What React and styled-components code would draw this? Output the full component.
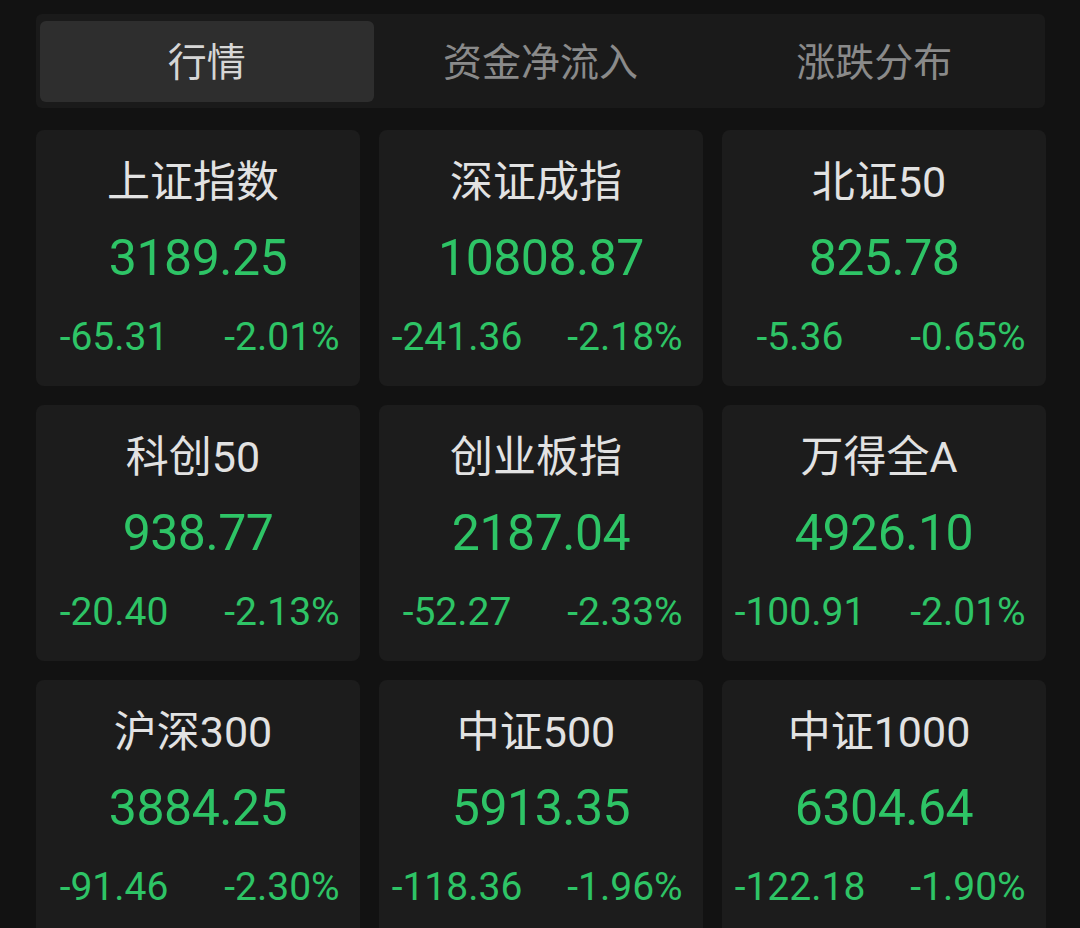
import React from "react";
import styled, { createGlobalStyle } from "styled-components";

const GlobalStyle = createGlobalStyle`
  html, body {
    margin: 0;
    padding: 0;
    background: #121212;
    overflow: hidden;
  }
  body {
    font-family: Roboto, "Noto Sans CJK SC", sans-serif;
  }
`;

const tabs = ["行情", "资金净流入", "涨跌分布"];

const indices = [
  { name: "上证指数", price: "3189.25", change: "-65.31", pct: "-2.01%" },
  { name: "深证成指", price: "10808.87", change: "-241.36", pct: "-2.18%" },
  { name: "北证50", price: "825.78", change: "-5.36", pct: "-0.65%" },
  { name: "科创50", price: "938.77", change: "-20.40", pct: "-2.13%" },
  { name: "创业板指", price: "2187.04", change: "-52.27", pct: "-2.33%" },
  { name: "万得全A", price: "4926.10", change: "-100.91", pct: "-2.01%" },
  { name: "沪深300", price: "3884.25", change: "-91.46", pct: "-2.30%" },
  { name: "中证500", price: "5913.35", change: "-118.36", pct: "-1.96%" },
  { name: "中证1000", price: "6304.64", change: "-122.18", pct: "-1.90%" },
];

const App = () => {
  const [active, setActive] = React.useState(0);

  return (
    <Page>
      <GlobalStyle />
      <TabBar>
        {tabs.map((t, i) => (
          <Tab key={t} $active={i === active} onClick={() => setActive(i)}>
            {t}
          </Tab>
        ))}
      </TabBar>
      <Grid>
        {indices.map((item) => (
          <Card key={item.name}>
            <Name>{item.name}</Name>
            <Price>{item.price}</Price>
            <Changes>
              <Change>{item.change}</Change>
              <Change>{item.pct}</Change>
            </Changes>
          </Card>
        ))}
      </Grid>
    </Page>
  );
};

const Page = styled.div`
  width: 1080px;
  height: 928px;
  box-sizing: border-box;
  padding: 14px 36px 0;
  display: flex;
  flex-direction: column;
  gap: 22px;
  overflow: hidden;
`;

const TabBar = styled.div`
  flex-shrink: 0;
  display: grid;
  grid-template-columns: repeat(3, 1fr);
  width: 1009px;
  height: 94px;
  box-sizing: border-box;
  padding: 7px 4px 6px;
  background: #1a1a1a;
  border-radius: 6px;
`;

const Tab = styled.div`
  display: flex;
  align-items: center;
  justify-content: center;
  padding-bottom: 6px;
  border-radius: 6px;
  font-family: "Noto Sans CJK SC", sans-serif;
  font-size: 39px;
  color: ${(p) => (p.$active ? "#d6d6d6" : "#8a8a8a")};
  background: ${(p) => (p.$active ? "#2e2e2e" : "transparent")};
  cursor: pointer;
`;

const Grid = styled.div`
  flex-shrink: 0;
  display: grid;
  grid-template-columns: repeat(3, 324px);
  grid-auto-rows: 256px;
  column-gap: 19px;
  row-gap: 19px;
`;

const Card = styled.div`
  background: #1c1c1c;
  border-radius: 8px;
  display: flex;
  flex-direction: column;
  align-items: center;
  padding-top: 26px;
  box-sizing: border-box;
`;

const Name = styled.div`
  margin-right: 10px;
  font-size: 43px;
  line-height: 52px;
  color: #e2e2e2;
`;

const Price = styled.div`
  margin-top: 22px;
  font-size: 50px;
  line-height: 56px;
  color: #2ec466;
  letter-spacing: -0.5px;
`;

const Changes = styled.div`
  width: 100%;
  margin-top: 28px;
  display: grid;
  grid-template-columns: 1fr 1fr;
  column-gap: 12px;
`;

const Change = styled.div`
  text-align: center;
  font-size: 39px;
  line-height: 46px;
  color: #2ec466;
`;

export default App;
